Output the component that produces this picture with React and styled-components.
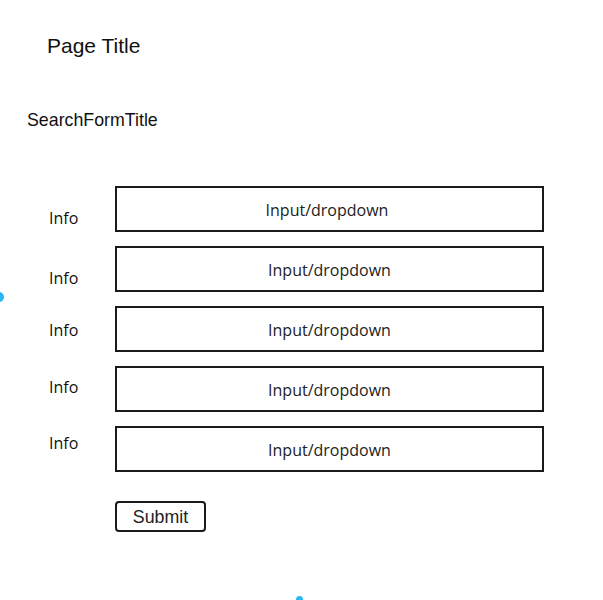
import React from "react";
import styled, { createGlobalStyle } from "styled-components";

const Global = createGlobalStyle`
  html, body { margin: 0; padding: 0; background: #ffffff; }
  body { font-family: "Liberation Sans", Arial, sans-serif; color: #000; }
`;

const Page = styled.div`
  position: relative;
  width: 603px;
  height: 600px;
  overflow: hidden;
  background: #fff;
`;

const PageTitle = styled.h1`
  margin: 0;
  padding: 34px 0 0 47px;
  font-family: "Liberation Sans", Arial, sans-serif;
  font-weight: normal;
  font-size: 21px;
  line-height: 24px;
  color: #111;
`;

const FormTitle = styled.h2`
  margin: 52px 0 0 27px;
  font-family: "Liberation Sans", Arial, sans-serif;
  font-weight: normal;
  font-size: 17.8px;
  line-height: 20px;
  color: #111;
`;

const Form = styled.form`
  margin: 56px 0 0 0;
  display: grid;
  grid-template-columns: 115px 429px;
  row-gap: 14px;
`;

const Label = styled.label`
  display: flex;
  align-items: flex-start;
  padding: ${(p) => p.$top}px 0 0 49px;
  font-family: "Open Sans", "Noto Sans", sans-serif;
  font-size: 16px;
  line-height: 22px;
  color: #111;
`;

const Field = styled.div`
  box-sizing: border-box;
  height: 46px;
  border: 2px solid #1a1a1a;
  display: flex;
  align-items: center;
  justify-content: center;
  padding: 2px ${(p) => p.$nudge || 0}px 0 0;
  font-family: "Open Sans", "Noto Sans", sans-serif;
  font-size: 16px;
  color: #222;
`;

const SubmitButton = styled.button`
  box-sizing: border-box;
  margin: 29px 0 0 115px;
  width: 91px;
  height: 31px;
  border: 2px solid #1a1a1a;
  border-radius: 4px;
  background: #fff;
  padding: 2px 0 0 0;
  font-family: "Liberation Sans", Arial, sans-serif;
  font-size: 17.8px;
  color: #222;
  display: block;
`;

const Handle = styled.span`
  position: absolute;
  left: ${(p) => p.$x}px;
  top: ${(p) => p.$y}px;
  width: ${(p) => p.$size}px;
  height: ${(p) => p.$size}px;
  border-radius: 50%;
  background: #29b6f2;
`;

const rows = [
  { top: 21, nudge: 5 },
  { top: 21, nudge: 0 },
  { top: 13, nudge: 0 },
  { top: 10, nudge: 0 },
  { top: 6, nudge: 0 },
];

export default function App() {
  return (
    <>
      <Global />
      <Page>
        <PageTitle>Page Title</PageTitle>
        <FormTitle>SearchFormTitle</FormTitle>
        <Form onSubmit={(e) => e.preventDefault()}>
          {rows.map((r, i) => (
            <React.Fragment key={i}>
              <Label $top={r.top}>Info</Label>
              <Field $nudge={r.nudge}>Input/dropdown</Field>
            </React.Fragment>
          ))}
        </Form>
        <SubmitButton type="button">Submit</SubmitButton>
        <Handle $x={-6} $y={292} $size={10} />
        <Handle $x={296} $y={596} $size={7} />
      </Page>
    </>
  );
}
